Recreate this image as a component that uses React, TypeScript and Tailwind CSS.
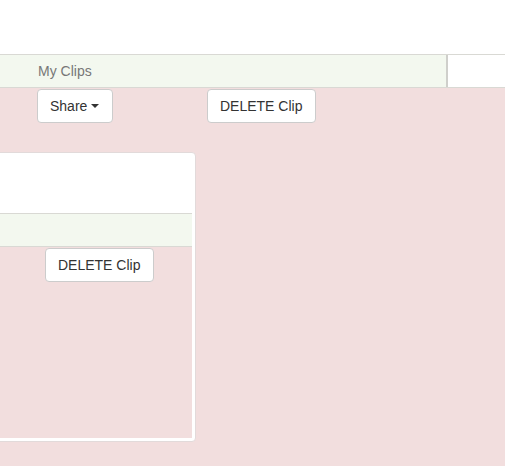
import React from 'react';

const Btn: React.FC<{ children: React.ReactNode; className?: string }> = ({ children, className = '' }) => (
  <button
    className={`h-[34px] px-3 bg-white border border-[#ccc] rounded text-[14px] text-[#333] leading-none flex items-center ${className}`}
  >
    {children}
  </button>
);

const App: React.FC = () => {
  return (
    <div className="w-[505px] h-[466px] overflow-hidden bg-[#f2dede] font-['Liberation_Sans',Arial,sans-serif]">
      <div className="h-[54px] bg-white"></div>

      {/* tab strip */}
      <div className="flex h-[34px] border-y border-[#d9d9d4]">
        <div className="flex-1 bg-[#f3f8ef] pl-[38px] flex items-center text-[14px] text-[#777]">My Clips</div>
        <div className="w-[2px] bg-[#cfcfcb]"></div>
        <div className="w-[57px] bg-white"></div>
      </div>

      <div className="flex mt-px">
        <Btn className="ml-[37px] w-[76px]">
          Share
          <span className="ml-1 border-x-[4px] border-x-transparent border-t-[4px] border-t-[#333]"></span>
        </Btn>
        <Btn className="ml-[94px] w-[109px]">DELETE Clip</Btn>
      </div>

      {/* clip card */}
      <div className="mt-[29px] -ml-[4px] w-[200px] h-[290px] bg-white border border-[#e2dada] rounded pr-[3px] pb-[3px] flex flex-col">
        <div className="h-[60px]"></div>
        <div className="h-[34px] bg-[#f3f8ef] border-y border-[#d9d9d4]"></div>
        <div className="flex-1 bg-[#f2dede] pt-px">
          <Btn className="ml-[48px] w-[109px]">DELETE Clip</Btn>
        </div>
      </div>
    </div>
  );
};

export default App;
